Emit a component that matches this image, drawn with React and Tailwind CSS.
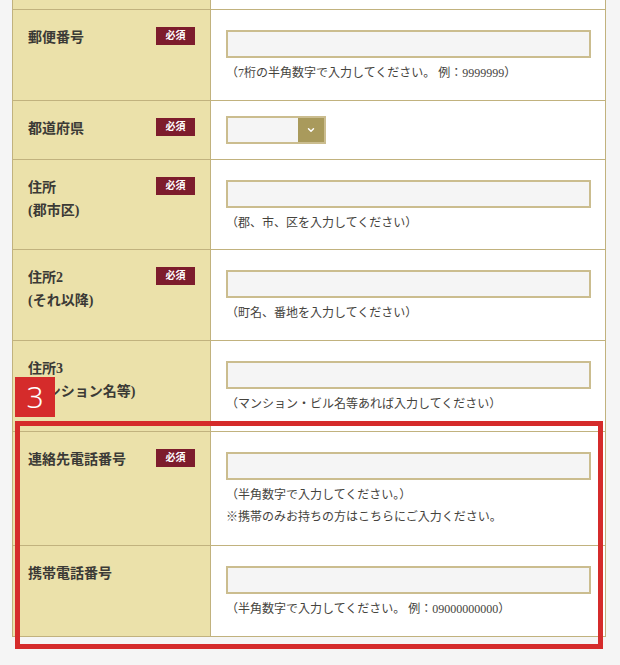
import React from 'react';
import { ChevronDown } from 'lucide-react';

const rows = [
  { label: ['郵便番号'], required: true, type: 'input', h: 'h-[91px]', hints: ['（7桁の半角数字で入力してください。 例：9999999）'] },
  { label: ['都道府県'], required: true, type: 'select', h: 'h-[59px]', hints: [] },
  { label: ['住所', '(郡市区)'], required: true, type: 'input', h: 'h-[90px]', hints: ['（郡、市、区を入力してください）'] },
  { label: ['住所2', '(それ以降)'], required: true, type: 'input', h: 'h-[91px]', hints: ['（町名、番地を入力してください）'] },
  { label: ['住所3', '(マンション名等)'], required: false, type: 'input', h: 'h-[91px]', hints: ['（マンション・ビル名等あれば入力してください）'] },
  {
    label: ['連絡先電話番号'],
    required: true,
    type: 'input',
    h: 'h-[114px]',
    hints: ['（半角数字で入力してください。）', '※携帯のみお持ちの方はこちらにご入力ください。'],
  },
  { label: ['携帯電話番号'], required: false, type: 'input', h: 'h-[91px]', hints: ['（半角数字で入力してください。 例：09000000000）'] },
];

const Badge = () => (
  <span className="mt-[1px] inline-flex h-[18px] w-[39px] shrink-0 items-center justify-center bg-[#7d1c2c] text-[10px] font-bold leading-none text-white">
    必須
  </span>
);

const Row = ({ row }) => {
  const isSelect = row.type === 'select';
  return (
    <div className={`grid grid-cols-[197px_1fr] border-b border-[#c1b27e] ${row.h}`}>
      {/* ラベル */}
      <div className="flex items-start justify-between bg-[#ebe1aa] pl-[15px] pr-[15px] pt-[16px]">
        <div className="text-[14px] font-bold leading-[23px] text-[#3b3a36]">
          {row.label.map((line) => (
            <div key={line}>{line}</div>
          ))}
        </div>
        {row.required && <Badge />}
      </div>

      {/* 入力欄 */}
      <div className={`border-l border-[#c1b27e] bg-white pl-[15px] pr-[14px] ${isSelect ? 'pt-[15px]' : 'pt-[20px]'}`}>
        {isSelect ? (
          <div className="flex h-[28px] w-[100px] border-2 border-[#cbbd8f] bg-[#f5f5f5]">
            <div className="flex-1" />
            <div className="flex w-[26px] items-center justify-center bg-[#a99a5c]">
              <ChevronDown size={10} strokeWidth={3.5} color="#ffffff" />
            </div>
          </div>
        ) : (
          <div className="h-[28px] w-full border-2 border-[#cbbd8f] bg-[#f5f5f5]" />
        )}
        {row.hints.length > 0 && (
          <div className="mt-[4px] text-[12px] leading-[22px] text-[#45433d]">
            {row.hints.map((h) => (
              <div key={h}>{h}</div>
            ))}
          </div>
        )}
      </div>
    </div>
  );
};

export default function App() {
  return (
    <div className="relative min-h-screen bg-[#f5f5f5] px-[12px] font-['Liberation_Serif','Noto_Sans_CJK_JP',serif]">
      <div className="w-[594px] border-x border-[#c1b27e]">
        {/* 前の行の続き */}
        <div className="grid h-[10px] grid-cols-[197px_1fr] border-b border-[#c1b27e]">
          <div className="bg-[#ebe1aa]" />
          <div className="border-l border-[#c1b27e] bg-white" />
        </div>
        {rows.map((row) => (
          <Row key={row.label[0]} row={row} />
        ))}
      </div>

      {/* 注釈 */}
      <div className="absolute left-[15px] top-[377px] flex h-[40px] w-[40px] items-center justify-center bg-[#d52b2b] font-['Noto_Sans',sans-serif] text-[30px] font-light leading-none text-white">
        3
      </div>
      <div className="absolute left-[15px] top-[421px] h-[228px] w-[588px] border-[5px] border-[#d52b2b]" />
    </div>
  );
}
